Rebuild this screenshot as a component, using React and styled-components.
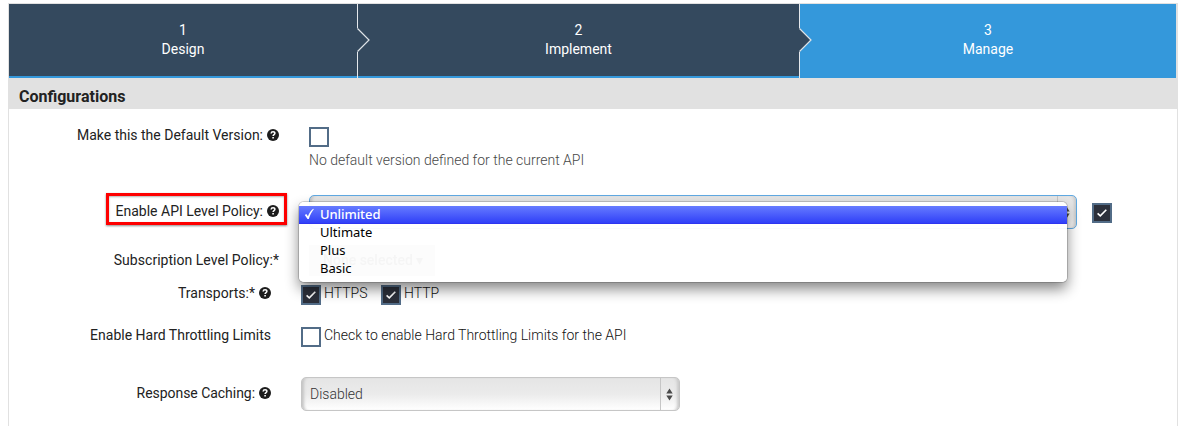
import React from "react";
import styled, { createGlobalStyle, css } from "styled-components";

const GlobalStyle = createGlobalStyle`
  * { box-sizing: border-box; }
  html, body { margin: 0; background: #fff; overflow: hidden; }
  body { font: 400 14px/20px Roboto, "Liberation Sans", sans-serif; color: #222; }
`;

const Panel = styled.main`
  width: 1170px;
  height: 423px;
  margin: 3px 0 0 8px;
  border: 1px solid #e1e1e1;
  border-bottom: 0;
`;

const Steps = styled.ol`
  display: flex;
  height: 74px;
  margin: 0;
  padding: 0 1px 0 0;
  background: #e1e1e1;
  list-style: none;
`;

const Step = styled.li`
  position: relative;
  width: ${(p) => p.$width}px;
  padding-top: 17px;
  text-align: center;
  line-height: 19px;
  color: #fff;
  background: ${(p) => (p.$active ? "#3498db" : "#34495e")};
  ${(p) => !p.$active && css`
    border-right: 1px solid #e4e8ec;
    box-shadow: inset 0 -2px #3498db;
  `}
`;

const StepText = styled.span`
  display: block;
`;

const Arrow = styled.svg`
  position: absolute;
  z-index: 1;
  top: 23px;
  right: -13px;
  width: 14px;
  height: 26px;
`;

const SectionTitle = styled.h2`
  height: 31px;
  margin: 0;
  padding: 9px 0 0 10px;
  background: #e1e1e1;
  font-size: 16px;
  font-weight: 700;
  line-height: 20px;
`;

const Row = styled.div`
  display: flex;
  align-items: flex-start;
  height: ${(p) => p.$height}px;
`;

const LabelCell = styled.div`
  display: flex;
  justify-content: flex-end;
  flex: none;
  width: ${(p) => p.$width}px;
  margin-right: ${(p) => p.$gap}px;
  padding-top: ${(p) => p.$top}px;
`;

const Label = styled.label`
  display: flex;
  align-items: center;
  gap: 4px;
  white-space: nowrap;
  letter-spacing: ${(p) => p.$track || 0}px;
`;

const Highlight = styled.div`
  display: flex;
  justify-content: flex-end;
  width: 181px;
  height: 32px;
  padding: 4px 5px 0 0;
  border: 3px solid #fe0000;
  box-shadow: 0 1px 2px rgba(0, 0, 0, 0.45), inset 0 1px 2px rgba(0, 0, 0, 0.3);
`;

const Field = styled.div`
  display: flex;
  flex-direction: ${(p) => (p.$column ? "column" : "row")};
  align-items: flex-start;
  position: relative;
  padding-top: ${(p) => p.$top}px;
`;

const Box = styled.span`
  display: flex;
  flex: none;
  align-items: center;
  justify-content: center;
  width: 20px;
  height: 20px;
  margin-left: ${(p) => p.$left || 0}px;
  margin-top: ${(p) => p.$top || 0}px;
  border: 2px solid #526c87;
  background: ${(p) => (p.$checked ? "#2c303b" : "#fff")};
`;

const BoxText = styled.span`
  width: ${(p) => p.$width}px;
  margin-left: 3px;
  margin-top: -2px;
  font-weight: 300;
  color: #111;
  white-space: nowrap;
`;

const Hint = styled.span`
  margin-top: 3px;
  font-weight: 300;
  color: #484848;
  white-space: nowrap;
`;

const Select = styled.div`
  display: flex;
  justify-content: space-between;
  width: ${(p) => p.$width}px;
  height: 34px;
  border: 1px solid ${(p) => (p.$focus ? "#5fa9e2" : "#c6c6c6")};
  border-radius: 5px;
  background: linear-gradient(#e5e5e5, #ebebeb 50%, #fff);
  box-shadow: inset 4px 0 3px -2px #c4c4c4, inset -4px 0 3px -2px #c9c9c9;
  color: #333;
  font-weight: 300;
  line-height: 32px;
  padding-left: 8px;
`;

const Stepper = styled.span`
  display: flex;
  align-items: center;
  justify-content: center;
  width: 19px;
  padding-right: 1px;
  border-left: 1px solid #c6c6c6;
`;

const Ghost = styled.span`
  width: 126px;
  height: 31px;
  padding-left: 14px;
  background: #afafaf;
  color: #222;
  line-height: 31px;
  font-weight: 500;
  white-space: nowrap;
  filter: blur(0.7px);
`;

const Menu = styled.ul`
  position: absolute;
  z-index: 2;
  top: 9px;
  left: -10px;
  width: 768px;
  height: 80px;
  margin: 0;
  padding: 4px 0;
  list-style: none;
  border-radius: 5px;
  background: rgba(255, 255, 255, 0.955);
  box-shadow: 0 0 0 1px rgba(0, 0, 0, 0.16), 0 7px 14px rgba(0, 0, 0, 0.48);
  font: 400 13px/18px "Noto Sans", "Open Sans", sans-serif;
  color: #000;
`;

const Option = styled.li`
  display: flex;
  align-items: center;
  height: 18px;
  padding: 0 0 2px 5px;
  ${(p) => p.$selected && css`
    color: #fff;
    font-weight: 500;
    letter-spacing: -0.08px;
    background: linear-gradient(#667bff, #3040f8 94%, #2c2ce8);
  `}
`;

const Mark = styled.span`
  display: flex;
  width: 16px;
`;

const Help = () => (
  <svg width="12" height="12" viewBox="0 0 12 12" aria-hidden="true">
    <circle cx="6" cy="6" r="6" fill="#1d1d1d" />
    <path d="M4.1 4.5C4.2 3.3 5 2.8 6 2.8c1.100 0 1.900.6 1.900 1.500 0 1.300-1.800 1.300-1.800 2.700" fill="none" stroke="#fff" strokeWidth="1.5" />
    <path d="M5.300 8h1.600v1.500H5.300z" fill="#fff" />
  </svg>
);

const CheckBox = ({ checked, left, top }) => (
  <Box $checked={checked} $left={left} $top={top}>
    {checked && (
      <svg width="12" height="12" viewBox="0 0 12 12">
        <path d="M1.600 6.300l2.700 2.500 6-6" fill="none" stroke="#fff" strokeWidth="1.600" />
      </svg>
    )}
  </Box>
);

const Arrows = () => (
  <Stepper>
    <svg width="7" height="13" viewBox="0 0 7 13">
      <path d="M0.300 5.500L3.500.5l3.200 5zM.3 7.500l3.200 5 3.200-5z" fill="#4a4a4a" />
    </svg>
  </Stepper>
);

const StepArrow = () => (
  <Arrow viewBox="0 0 14 26">
    <path d="M0 1h1.500l11 12-11 12H0z" fill="#34495e" />
    <path d="M1.500 1.500L13 13 1.500 24.500" fill="none" stroke="#dfe4e8" strokeWidth="1.200" />
  </Arrow>
);

export default function App() {
  return (
    <>
      <GlobalStyle />
      <Panel>
        <Steps>
          <Step $width={349}><StepText>1</StepText><StepText>Design</StepText><StepArrow /></Step>
          <Step $width={442}><StepText>2</StepText><StepText>Implement</StepText><StepArrow /></Step>
          <Step $width={376} $active><StepText>3</StepText><StepText>Manage</StepText></Step>
        </Steps>
        <SectionTitle>Configurations</SectionTitle>

        <Row $height={84}>
          <LabelCell $width={270} $gap={30} $top={16}>
            <Label>Make this the Default Version: <Help /></Label>
          </LabelCell>
          <Field $top={18} $column>
            <CheckBox />
            <Hint>No default version defined for the current API</Hint>
          </Field>
        </Row>

        <Row $height={51}>
          <LabelCell $width={278} $gap={22} $top={0}>
            <Highlight><Label>Enable API Level Policy: <Help /></Label></Highlight>
          </LabelCell>
          <Field $top={2}>
            <Select $width={768} $focus><span /><Arrows /></Select>
            <CheckBox checked left={15} top={8} />
            <Menu>
              <Option $selected>
                <Mark>
                  <svg width="11" height="12" viewBox="0 0 11 12">
                    <path d="M.8 7l1.500-1 1.600 2.300C5.200 5 6.800 2.500 9.200.7l.6.5C7.500 4 6 7.300 4.800 11H3.500z" fill="#fff" />
                  </svg>
                </Mark>
                Unlimited
              </Option>
              <Option><Mark />Ultimate</Option>
              <Option><Mark />Plus</Option>
              <Option><Mark />Basic</Option>
            </Menu>
          </Field>
        </Row>

        <Row $height={33}>
          <LabelCell $width={270} $gap={30} $top={6}>
            <Label $track={0.03}>Subscription Level Policy:*</Label>
          </LabelCell>
          <Field $top={1}><Ghost>None selected ▾</Ghost></Field>
        </Row>

        <Row $height={45}>
          <LabelCell $width={262} $gap={30} $top={6}>
            <Label>Transports:* <Help /></Label>
          </LabelCell>
          <Field $top={8}>
            <CheckBox checked />
            <BoxText $width={57}>HTTPS</BoxText>
            <CheckBox checked />
            <BoxText>HTTP</BoxText>
          </Field>
        </Row>

        <Row $height={50}>
          <LabelCell $width={262} $gap={30} $top={3}>
            <Label>Enable Hard Throttling Limits</Label>
          </LabelCell>
          <Field $top={5}>
            <CheckBox />
            <BoxText>Check to enable Hard Throttling Limits for the API</BoxText>
          </Field>
        </Row>

        <Row $height={54}>
          <LabelCell $width={262} $gap={30} $top={11}>
            <Label $track={-0.04}>Response Caching: <Help /></Label>
          </LabelCell>
          <Field $top={5}>
            <Select $width={379}><span>Disabled</span><Arrows /></Select>
          </Field>
        </Row>
      </Panel>
    </>
  );
}
